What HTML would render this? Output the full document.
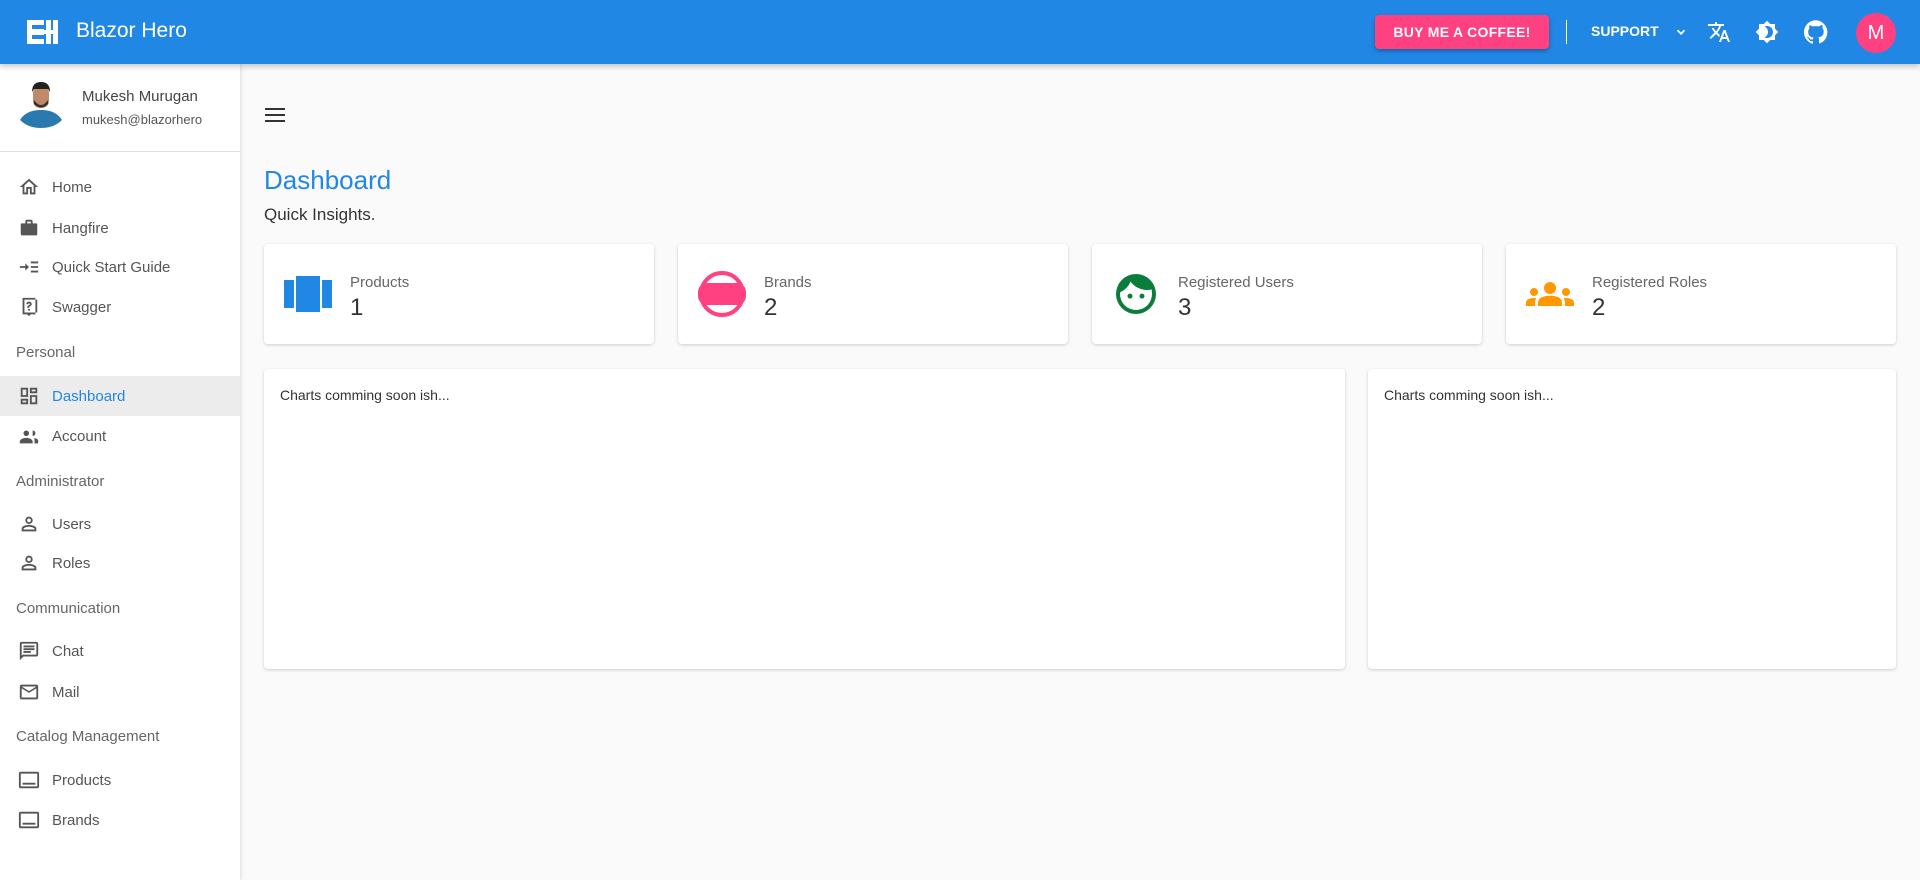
<!DOCTYPE html>
<html><head><meta charset="utf-8"><style>
*{box-sizing:border-box;margin:0;padding:0}
body{width:1920px;height:880px;overflow:hidden;background:#fafafa;font-family:"Liberation Sans",sans-serif;color:#424242;position:relative}
.bar{position:absolute;left:0;top:0;width:1920px;height:64px;background:#2187e5;box-shadow:0 2px 6px rgba(0,0,0,.25);z-index:2}
.side{position:absolute;left:0;top:64px;width:240px;height:816px;background:#fff;box-shadow:1px 0 4px rgba(0,0,0,.12)}
.abs{position:absolute}
.nav{position:absolute;left:0;width:240px;height:40px;display:flex;align-items:center;font-size:15px;color:#555}
.nav svg{position:absolute;left:18px;width:22px;height:22px;fill:#555}
.nav span{position:absolute;left:52px}
.sec{position:absolute;left:16px;font-size:15px;color:#666}
.card{position:absolute;background:#fff;border-radius:4px;box-shadow:0 1px 3px rgba(0,0,0,.18)}
.lbl{position:absolute;left:86px;top:30px;font-size:15px;color:#666}
.val{position:absolute;left:86px;top:50px;font-size:24px;color:#333}
.ic{position:absolute;left:20px;top:26px;width:48px;height:48px}
</style></head><body>
<div class="bar">
 <svg class="abs" style="left:27px;top:20px" width="31" height="24" viewBox="0 0 31 24"><rect x="0" y="0" width="17" height="24" fill="#fff"/><rect x="5" y="5" width="12" height="4" fill="#2187e5"/><rect x="5" y="15" width="12" height="4" fill="#2187e5"/><rect x="19" y="0" width="5" height="24" fill="#fff"/><rect x="26" y="0" width="5" height="24" fill="#fff"/><rect x="17" y="10" width="10" height="4" fill="#fff"/></svg>
 <div class="abs" style="left:76px;top:19px;font-size:21px;color:#fff">Blazor Hero</div>
 <div class="abs" style="left:1375px;top:15px;width:174px;height:34px;background:#ff4081;border-radius:4px;box-shadow:0 2px 4px rgba(0,0,0,.3);color:#fff;font-size:14px;font-weight:bold;letter-spacing:.3px;text-align:center;line-height:34px">BUY ME A COFFEE!</div>
 <div class="abs" style="left:1566px;top:20px;width:1px;height:24px;background:#fff"></div>
 <div class="abs" style="left:1591px;top:23px;font-size:14px;font-weight:bold;color:#fff">SUPPORT</div>
 <svg class="abs" style="left:1674px;top:25px" width="14" height="14" viewBox="0 0 24 24"><path d="M6 9l6 6 6-6" stroke="#fff" stroke-width="3" fill="none"/></svg>
 <svg class="abs" style="left:1707px;top:20px" width="24" height="24" viewBox="0 0 24 24" fill="#fff"><path d="M12.87 15.07l-2.54-2.51.03-.03A17.52 17.52 0 0014.07 6H17V4h-7V2H8v2H1v2h11.17C11.5 7.92 10.44 9.75 9 11.35 8.07 10.32 7.3 9.19 6.69 8h-2c.73 1.63 1.73 3.17 2.98 4.56l-5.09 5.02L4 19l5-5 3.11 3.11.76-2.04zM18.5 10h-2L12 22h2l1.12-3h4.75L21 22h2l-4.5-12zm-2.62 7l1.62-4.33L19.12 17h-3.24z"/></svg>
 <svg class="abs" style="left:1755px;top:20px" width="24" height="24" viewBox="0 0 24 24" fill="#fff"><path d="M20 8.69V4h-4.69L12 .69 8.69 4H4v4.69L.69 12 4 15.31V20h4.69L12 23.31 15.31 20H20v-4.69L23.31 12 20 8.69zM12 18c-.89 0-1.74-.2-2.5-.55C11.56 16.5 13 14.42 13 12s-1.44-4.5-3.5-5.45C10.26 6.2 11.11 6 12 6c3.31 0 6 2.69 6 6s-2.69 6-6 6z"/></svg>
 <svg class="abs" style="left:1804px;top:20px" width="24" height="24" viewBox="0 0 24 24" fill="#fff"><path d="M12 .3a12 12 0 00-3.8 23.4c.6.1.8-.3.8-.6v-2c-3.3.7-4-1.6-4-1.6-.6-1.4-1.4-1.8-1.4-1.8-1-.7.1-.7.1-.7 1.2.1 1.8 1.2 1.8 1.2 1 1.8 2.8 1.3 3.5 1 0-.8.4-1.3.7-1.6-2.7-.3-5.5-1.3-5.5-6 0-1.2.5-2.3 1.3-3.1-.2-.4-.6-1.6 0-3.2 0 0 1-.3 3.3 1.2a11.5 11.5 0 016 0C17.3 4.7 18.3 5 18.3 5c.6 1.6.2 2.8.1 3.2.8.8 1.3 1.9 1.3 3.2 0 4.6-2.8 5.6-5.5 5.9.5.4.9 1 .9 2.2v3.3c0 .3.1.7.8.6A12 12 0 0012 .3"/></svg>
 <div class="abs" style="left:1856px;top:13px;width:40px;height:40px;border-radius:50%;background:#ff4081;color:#fff;font-size:20px;text-align:center;line-height:40px">M</div>
</div>
<div class="side">
 <svg class="abs" style="left:18px;top:16px" width="46" height="48" viewBox="0 0 46 48"><circle cx="23" cy="25" r="23" fill="#fff"/><path d="M2 40 Q8 30 23 30 Q38 30 44 40 Q36 48 23 48 Q10 48 2 40z" fill="#2a7ab0"/><rect x="15" y="6" width="16" height="22" rx="7" fill="#c08a6a"/><path d="M14 12 Q14 2 23 2 Q32 2 32 12 L30 9 L16 9z" fill="#222"/><path d="M16 20 Q23 30 30 20 L30 24 Q23 31 16 24z" fill="#333"/></svg>
 <div class="abs" style="left:82px;top:24px;font-size:15px;color:#444">Mukesh Murugan</div>
 <div class="abs" style="left:82px;top:48px;font-size:13px;color:#555">mukesh@blazorhero</div>
 <div class="abs" style="left:0;top:87px;width:240px;height:1px;background:#e0e0e0"></div>
</div>
<div class="abs" style="left:0;top:64px;width:240px;height:816px">
 <div class="nav" style="top:103px"><svg viewBox="0 0 24 24"><path d="M12 5.7l5 4.5V18h-2v-6H9v6H7v-7.8l5-4.5M12 3L2 12h3v8h6v-6h2v6h6v-8h3L12 3z"/></svg><span>Home</span></div>
 <div class="nav" style="top:144px"><svg viewBox="0 0 24 24"><path d="M10 3h4a2 2 0 012 2v2h4a1 1 0 011 1v11a1 1 0 01-1 1H4a1 1 0 01-1-1V8a1 1 0 011-1h4V5a2 2 0 012-2zm0 2v2h4V5h-4z"/></svg><span>Hangfire</span></div>
 <div class="nav" style="top:183px"><svg viewBox="0 0 24 24"><path d="M2 11h6V8l4 4-4 4v-3H2zm12-5h8v2h-8zm0 5h8v2h-8zm0 5h8v2h-8z"/></svg><span>Quick Start Guide</span></div>
 <div class="nav" style="top:223px"><svg viewBox="0 0 24 24"><path d="M5 2h14v18h-5l-2 2-2-2H5zm2 2v14h14V4zM11 14h2v2h-2zm1-8a3 3 0 013 3c0 2-3 2-3 4h-2c0-3 3-3 3-4a1 1 0 00-2 0H9a3 3 0 013-3z"/></svg><span>Swagger</span></div>
 <div class="sec" style="top:280px">Personal</div>
 <div class="nav" style="top:312px;background:#ececec;color:#2187e5"><svg viewBox="0 0 24 24" style="fill:#555"><path d="M3 3h8v10H3zm2 2v6h4V5zm8-2h8v6h-8zm2 2v2h4V5zM3 15h8v6H3zm2 2v2h4v-2zm8-6h8v10h-8zm2 2v6h4v-6z"/></svg><span>Dashboard</span></div>
 <div class="nav" style="top:352px"><svg viewBox="0 0 24 24"><path d="M9 12a3 3 0 100-6 3 3 0 000 6zm0 2c-3 0-7 1.5-7 4v2h14v-2c0-2.5-4-4-7-4zm7-8a3 3 0 010 6zm2 8c2 .5 4 1.6 4 3v3h-4z"/></svg><span>Account</span></div>
 <div class="sec" style="top:409px">Administrator</div>
 <div class="nav" style="top:440px"><svg viewBox="0 0 24 24"><path d="M12 6a2 2 0 110 4 2 2 0 010-4m0 9c2.7 0 5.8 1.3 6 2v1H6v-1c.2-.7 3.3-2 6-2m0-11a4 4 0 100 8 4 4 0 000-8zm0 9c-2.7 0-8 1.3-8 4v3h16v-3c0-2.7-5.3-4-8-4z"/></svg><span>Users</span></div>
 <div class="nav" style="top:479px"><svg viewBox="0 0 24 24"><path d="M12 6a2 2 0 110 4 2 2 0 010-4m0 9c2.7 0 5.8 1.3 6 2v1H6v-1c.2-.7 3.3-2 6-2m0-11a4 4 0 100 8 4 4 0 000-8zm0 9c-2.7 0-8 1.3-8 4v3h16v-3c0-2.7-5.3-4-8-4z"/></svg><span>Roles</span></div>
 <div class="sec" style="top:536px">Communication</div>
 <div class="nav" style="top:567px"><svg viewBox="0 0 24 24"><path d="M20 2H4a2 2 0 00-2 2v18l4-4h14a2 2 0 002-2V4a2 2 0 00-2-2zm0 14H5.2L4 17.2V4h16zM6 12h8v2H6zm0-3h12v2H6zm0-3h12v2H6z"/></svg><span>Chat</span></div>
 <div class="nav" style="top:608px"><svg viewBox="0 0 24 24"><path d="M22 6a2 2 0 00-2-2H4a2 2 0 00-2 2v12a2 2 0 002 2h16a2 2 0 002-2zm-2 0l-8 5-8-5zm0 12H4V8l8 5 8-5z"/></svg><span>Mail</span></div>
 <div class="sec" style="top:664px">Catalog Management</div>
 <div class="nav" style="top:696px"><svg viewBox="0 0 24 24"><path d="M21 3H3a2 2 0 00-2 2v14a2 2 0 002 2h18a2 2 0 002-2V5a2 2 0 00-2-2zm0 16H3V5h18zM5 15h14v2H5z"/></svg><span>Products</span></div>
 <div class="nav" style="top:736px"><svg viewBox="0 0 24 24"><path d="M21 3H3a2 2 0 00-2 2v14a2 2 0 002 2h18a2 2 0 002-2V5a2 2 0 00-2-2zm0 16H3V5h18zM5 15h14v2H5z"/></svg><span>Brands</span></div>
</div>
<svg class="abs" style="left:265px;top:106px" width="20" height="18" viewBox="0 0 20 18"><rect y="2" width="20" height="2" fill="#333"/><rect y="8" width="20" height="2" fill="#333"/><rect y="14" width="20" height="2" fill="#333"/></svg>
<div class="abs" style="left:264px;top:165px;font-size:26px;color:#2187e5">Dashboard</div>
<div class="abs" style="left:264px;top:205px;font-size:17px;color:#333">Quick Insights.</div>

<div class="card" style="left:264px;top:244px;width:390px;height:100px">
 <svg class="ic" viewBox="0 0 48 48" fill="#2187e5"><rect x="0" y="10" width="10" height="28"/><rect x="12" y="6" width="24" height="36"/><rect x="38" y="10" width="10" height="28"/></svg>
 <div class="lbl">Products</div><div class="val">1</div></div>
<div class="card" style="left:678px;top:244px;width:390px;height:100px">
 <svg class="ic" viewBox="0 0 48 48" fill="#ff4081"><circle cx="24" cy="24" r="21" fill="none" stroke="#ff4081" stroke-width="4"/><rect x="0" y="13" width="48" height="22" rx="9"/></svg>
 <div class="lbl">Brands</div><div class="val">2</div></div>
<div class="card" style="left:1092px;top:244px;width:390px;height:100px">
 <svg class="ic" viewBox="0 0 24 24" fill="#0a7d3a"><path d="M9 11.8a1.2 1.2 0 100 2.5 1.2 1.2 0 000-2.5zm6 0a1.2 1.2 0 100 2.5 1.2 1.2 0 000-2.5zM12 2a10 10 0 100 20 10 10 0 000-20zm0 18a8 8 0 01-8-8c0-.3 0-.6.1-.9a10 10 0 005.2-5.3A10 10 0 0017.5 10c.8 0 1.6-.1 2.3-.3.1.7.2 1.5.2 2.3a8 8 0 01-8 8z"/></svg>
 <div class="lbl">Registered Users</div><div class="val">3</div></div>
<div class="card" style="left:1506px;top:244px;width:390px;height:100px">
 <svg class="ic" viewBox="0 0 24 24" fill="#ff9800"><path d="M12 12.8c1.6 0 3.1.4 4.3.9 1.1.5 1.7 1.6 1.7 2.8V18H6v-1.5c0-1.2.7-2.3 1.7-2.8 1.2-.5 2.7-.9 4.3-.9zM4 13a2 2 0 100-4 2 2 0 000 4zm1.1 1.1A7 7 0 004 14c-1 0-1.9.2-2.8.6A2 2 0 000 16.4V18h4.5v-1.6c0-.8.2-1.6.6-2.3zM20 13a2 2 0 100-4 2 2 0 000 4zm4 3.4c0-.8-.5-1.5-1.2-1.8A7 7 0 0020 14c-.4 0-.8 0-1.1.1.4.7.6 1.5.6 2.3V18H24zM12 6a3 3 0 110 6 3 3 0 010-6z"/></svg>
 <div class="lbl">Registered Roles</div><div class="val">2</div></div>

<div class="card" style="left:264px;top:369px;width:1081px;height:300px"><div class="abs" style="left:16px;top:18px;font-size:14px;color:#333">Charts comming soon ish...</div></div>
<div class="card" style="left:1368px;top:369px;width:528px;height:300px"><div class="abs" style="left:16px;top:18px;font-size:14px;color:#333">Charts comming soon ish...</div></div>
</body></html>
